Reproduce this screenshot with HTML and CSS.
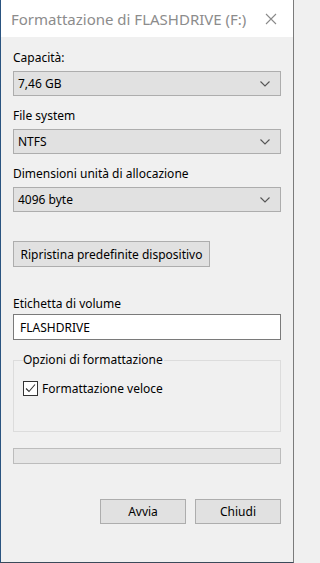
FILE: index.html
```html
<!DOCTYPE html>
<html lang="it">
<head>
<meta charset="utf-8">
<title>Formattazione di FLASHDRIVE (F:)</title>
<link rel="stylesheet" href="styles.css">
</head>
<body>
<div class="window">
  <div class="titlebar">
    <span class="title">Formattazione di FLASHDRIVE (F:)</span>
    <span class="close">
      <svg width="12" height="12" viewBox="0 0 12 12"><path d="M1 1 L11 11 M11 1 L1 11" stroke="#8a8a8a" stroke-width="1.1" fill="none"/></svg>
    </span>
  </div>
  <div class="content">
    <div class="label">Capacità:</div>
    <div class="combo"><span>7,46 GB</span><svg class="chev" width="10" height="6" viewBox="0 0 10 6"><path d="M0.5 0.5 L5 5 L9.5 0.5" stroke="#555" stroke-width="1.1" fill="none"/></svg></div>

    <div class="label gap">File system</div>
    <div class="combo"><span>NTFS</span><svg class="chev" width="10" height="6" viewBox="0 0 10 6"><path d="M0.5 0.5 L5 5 L9.5 0.5" stroke="#555" stroke-width="1.1" fill="none"/></svg></div>

    <div class="label gap">Dimensioni unità di allocazione</div>
    <div class="combo"><span>4096 byte</span><svg class="chev" width="10" height="6" viewBox="0 0 10 6"><path d="M0.5 0.5 L5 5 L9.5 0.5" stroke="#555" stroke-width="1.1" fill="none"/></svg></div>

    <div class="btn reset">Ripristina predefinite dispositivo</div>

    <div class="label vol">Etichetta di volume</div>
    <div class="input">FLASHDRIVE</div>

    <div class="group">
      <div class="legend">Opzioni di formattazione</div>
      <div class="check-row">
        <span class="checkbox"><svg width="11" height="11" viewBox="0 0 11 11"><path d="M1 5.5 L4 8.5 L10 1.5" stroke="#333" stroke-width="1.1" fill="none"/></svg></span>
        <span>Formattazione veloce</span>
      </div>
    </div>

    <div class="progress"></div>

    <div class="actions">
      <div class="btn action">Avvia</div>
      <div class="btn action">Chiudi</div>
    </div>
  </div>
</div>
</body>
</html>
```

FILE: styles.css
```css
html, body {
  margin: 0;
  padding: 0;
}
body {
  height: 563px;
  overflow: hidden;
  background: #f0f0f0;
  font-family: "Noto Sans", "Open Sans", sans-serif;
  font-size: 12px;
  color: #000;
}
.window {
  width: 292px;
  height: 562px;
  background: #f0f0f0;
  border-left: 1px solid #2a5480;
  border-right: 1px solid #7b7b7b;
  border-bottom: 1px solid #3a4a5a;
  box-sizing: content-box;
}
.titlebar {
  height: 37px;
  background: #fff;
  display: flex;
  align-items: center;
  justify-content: space-between;
  padding: 0 16px 0 10px;
}
.title {
  font-size: 15px;
  color: #8c8c8c;
  line-height: 20px;
}
.close {
  display: flex;
  align-items: center;
}
.content {
  padding: 13px 12px 0 12px;
}
.label {
  height: 16px;
  line-height: 16px;
  margin-bottom: 5px;
  white-space: nowrap;
}
.label.gap {
  margin-top: 12px;
}
.combo {
  height: 23px;
  border: 1px solid #adadad;
  background: #e1e1e1;
  display: flex;
  align-items: center;
  justify-content: space-between;
  padding: 0 10px 0 4px;
}
.chev {
  display: block;
}
.btn {
  border: 1px solid #adadad;
  background: #e1e1e1;
  display: flex;
  align-items: center;
  justify-content: center;
  box-sizing: border-box;
}
.reset {
  width: 197px;
  height: 26px;
  margin-top: 29px;
}
.label.vol {
  margin-top: 29px;
  margin-bottom: 2px;
}
.input {
  height: 24px;
  border: 1px solid #7a7a7a;
  background: #fff;
  display: flex;
  align-items: center;
  padding: 0 6px;
}
.group {
  margin-top: 20px;
  height: 70px;
  border: 1px solid #dcdcdc;
  padding: 0 0 0 9px;
}
.legend {
  display: inline-block;
  background: #f0f0f0;
  padding: 0 1px 0 0;
  line-height: 16px;
  margin-top: -9px;
  vertical-align: top;
}
.check-row {
  display: flex;
  align-items: center;
  gap: 4px;
  margin-top: 2px;
}
.checkbox {
  width: 13px;
  height: 13px;
  border: 1px solid #333;
  background: #fff;
  display: flex;
  align-items: center;
  justify-content: center;
}
.progress {
  margin-top: 16px;
  height: 14px;
  border: 1px solid #bcbcbc;
  background: #e6e6e6;
}
.actions {
  display: flex;
  justify-content: flex-end;
  gap: 9px;
  margin-top: 35px;
}
.action {
  width: 86px;
  height: 25px;
}
```
